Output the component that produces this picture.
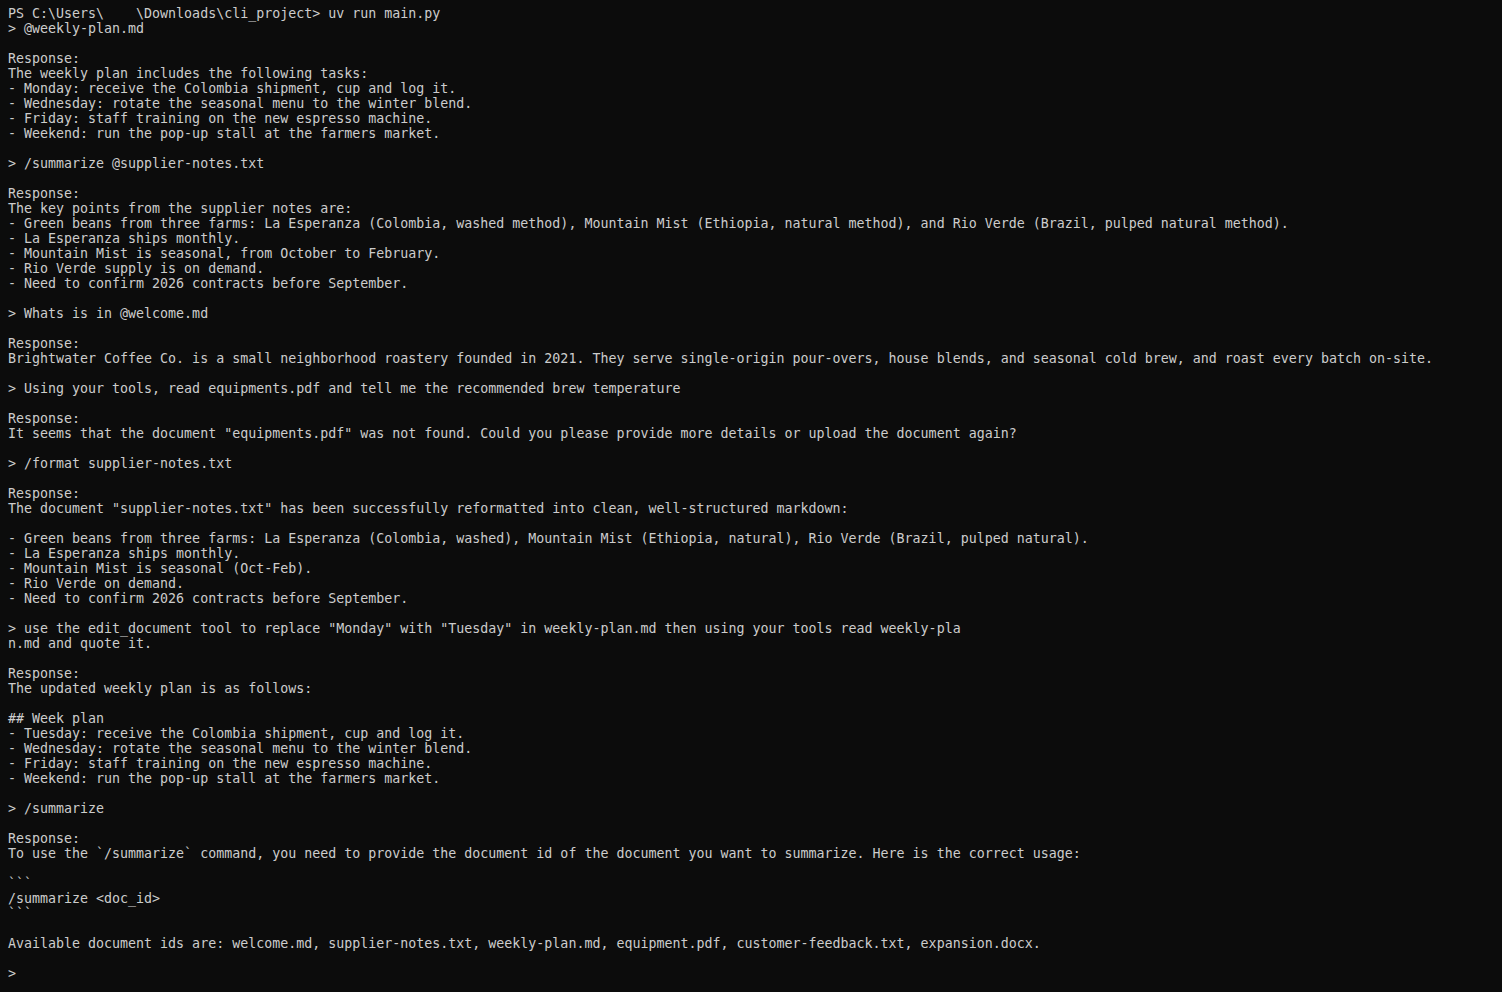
const lines: string[] = [
  "PS C:\\Users\\    \\Downloads\\cli_project> uv run main.py",
  "> @weekly-plan.md",
  "",
  "Response:",
  "The weekly plan includes the following tasks:",
  "- Monday: receive the Colombia shipment, cup and log it.",
  "- Wednesday: rotate the seasonal menu to the winter blend.",
  "- Friday: staff training on the new espresso machine.",
  "- Weekend: run the pop-up stall at the farmers market.",
  "",
  "> /summarize @supplier-notes.txt",
  "",
  "Response:",
  "The key points from the supplier notes are:",
  "- Green beans from three farms: La Esperanza (Colombia, washed method), Mountain Mist (Ethiopia, natural method), and Rio Verde (Brazil, pulped natural method).",
  "- La Esperanza ships monthly.",
  "- Mountain Mist is seasonal, from October to February.",
  "- Rio Verde supply is on demand.",
  "- Need to confirm 2026 contracts before September.",
  "",
  "> Whats is in @welcome.md",
  "",
  "Response:",
  "Brightwater Coffee Co. is a small neighborhood roastery founded in 2021. They serve single-origin pour-overs, house blends, and seasonal cold brew, and roast every batch on-site.",
  "",
  "> Using your tools, read equipments.pdf and tell me the recommended brew temperature",
  "",
  "Response:",
  'It seems that the document "equipments.pdf" was not found. Could you please provide more details or upload the document again?',
  "",
  "> /format supplier-notes.txt",
  "",
  "Response:",
  'The document "supplier-notes.txt" has been successfully reformatted into clean, well-structured markdown:',
  "",
  "- Green beans from three farms: La Esperanza (Colombia, washed), Mountain Mist (Ethiopia, natural), Rio Verde (Brazil, pulped natural).",
  "- La Esperanza ships monthly.",
  "- Mountain Mist is seasonal (Oct-Feb).",
  "- Rio Verde on demand.",
  "- Need to confirm 2026 contracts before September.",
  "",
  '> use the edit_document tool to replace "Monday" with "Tuesday" in weekly-plan.md then using your tools read weekly-pla',
  "n.md and quote it.",
  "",
  "Response:",
  "The updated weekly plan is as follows:",
  "",
  "## Week plan",
  "- Tuesday: receive the Colombia shipment, cup and log it.",
  "- Wednesday: rotate the seasonal menu to the winter blend.",
  "- Friday: staff training on the new espresso machine.",
  "- Weekend: run the pop-up stall at the farmers market.",
  "",
  "> /summarize",
  "",
  "Response:",
  "To use the `/summarize` command, you need to provide the document id of the document you want to summarize. Here is the correct usage:",
  "",
  "```",
  "/summarize <doc_id>",
  "```",
  "",
  "Available document ids are: welcome.md, supplier-notes.txt, weekly-plan.md, equipment.pdf, customer-feedback.txt, expansion.docx.",
  "",
  ">",
];

export default function App() {
  return (
    <div className="min-h-screen w-full overflow-hidden bg-[#0c0c0c] pl-[8px] pt-[6px] font-['DejaVu_Sans_Mono',monospace] text-[13.3px] leading-[15px] text-[#cccccc]">
      {lines.map((line, idx) => (
        <div key={idx} className="h-[15px] whitespace-pre">
          {line}
        </div>
      ))}
    </div>
  );
}
